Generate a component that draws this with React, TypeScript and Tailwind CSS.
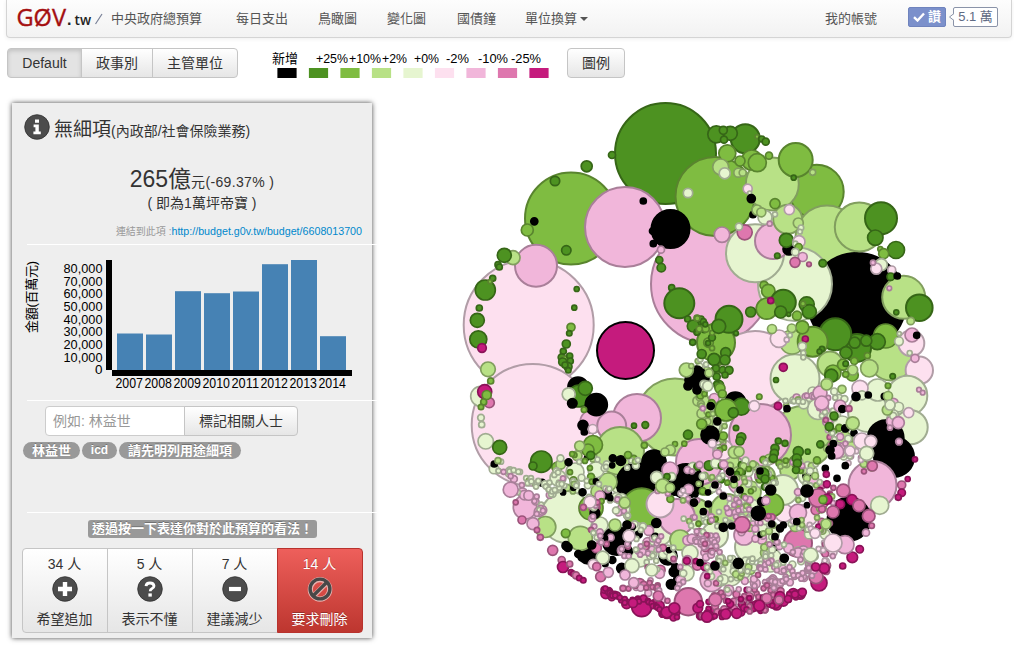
import React from "react";

const FILL: Record<string, string> = {
  a: "#4d9221", b: "#7fbc41", c: "#b8e186", d: "#e6f5d0", e: "#fde0ef",
  f: "#f1b6da", g: "#de77ae", h: "#c51b7d", k: "#000000",
};
const STROKE: Record<string, string> = {
  a: "#366617", b: "#59842e", c: "#819e5e", d: "#a1ac92", e: "#b19da7",
  f: "#a97f99", g: "#9b537a", h: "#8a1358", k: "#000000",
};

// Each entry: colour key, centre x, centre y, radius
const LARGE = `
a 665.5 153.5 50.5;b 571 218.5 46;f 625 227 40;f 710.5 284 59.5;b 816.7 191.7 27;c 827 237 31.5;b 715 196.5 39.5;k 670.5 229 19;
e 528.7 325 65;e 532.7 425 61;f 536 265.7 21;
c 772.3 184 26.5;k 857 302 49;d 795 284 37;d 755 253.3 29;f 773 241 18;c 787.7 219.3 14.5;
c 859.3 227 24.5;a 881 218.3 16;b 795.7 160 17;c 903.7 297.3 21.5;a 919.3 307.7 13.3;
e 755 370 39;c 803 437 31;d 795 378.7 24.5;f 760 435 31;c 675 417 38.5;f 637 418 24;f 591.7 421.7 11.5;f 611.7 426 14.5;
c 891 358 22.5;a 857 348 14;a 835.3 334.3 16;b 885.7 336 12;c 792 342 12;b 812.7 341.7 15;b 716 342.7 19;
e 911.3 343.3 13;e 919.3 370.3 13.7;d 868 412 20;d 907.3 395.7 20;d 910.7 427.3 17;k 885.7 438.3 18;k 894 457 20;
c 705 482 13;f 740 482 12;c 750 492 11;c 697 512 13;c 745 512 12;d 715 535 13;d 766 532 13;d 770 560 12;d 730 574 12;e 700 552 11;d 661 535 10;c 790 470 10;c 765 476 10;d 802 545 9;e 784 513 9;d 620 485 9;c 600 492 9;d 575 472 9;d 558 478 8;d 842 425 9;c 845 440 8;c 730 462 9;d 600 525 8;
d 877.7 390 11;d 818 409 10.5;c 620 451 24;f 699 462 23;k 636.5 483 20;k 654 462 12;k 686 481 17;
d 566.7 517 26;b 591 508 12;b 641.7 507.7 19.5;f 677 517 18;e 660 504 13.5;f 670 470 8;c 727 510 16;d 783 490 15;b 772 505 11.5;
k 616.7 541 14;k 588 555 9;c 580.3 538.3 12;c 545.3 527 10.5;f 525 507.3 11.7;
f 872.5 485 24;k 849 519 21.5;d 879.7 505.3 9;e 807 515 11;f 798 512.7 8.5;d 750 547 15;f 744 535 10;g 798 543 14;
c 680 540 10;d 690 553 8;d 686 573 8;f 711.7 580 11.5;d 640 558 9;e 723 450 10;d 808 475 10;k 668 556 9;c 608 482 9;d 596 470 8;
h 641.7 606.7 10;g 688.3 601.7 13.7;h 819 583 8;g 816 576.7 7`;

const SMALL = `
k 643.3 201 3;k 534.3 221.3 3.5;k 653 231 3.5;k 653.3 243.7 3;a 612 155 3.5;a 586.7 166.3 5.5;a 555 181 4.7;a 566.3 250.3 4.7;
b 527.3 230 6;c 513 257.7 7;a 504.3 255.3 7;a 498 264.7 3;a 499.3 267 3;a 485.3 290 10;a 492.7 278.3 3;b 490 281.7 2;a 576.7 289 2.5;
f 661 249.7 3.5;a 659.3 260 3.5;a 661.3 267.7 4.2;a 671.7 287.7 3;d 688 193 4.7;
a 679.3 303.3 15;a 687.7 319 3;a 693.3 326 6;a 697 332 3;a 692.7 342.3 3;b 697 318 3;
a 745.3 138.7 14.5;a 716.3 134.3 8.5;a 730.3 133.3 7;a 723.3 130.3 4;a 724 139.7 3.5;b 757 136.7 2;a 761.7 139 3;a 765.7 141.7 3.5;
b 727.3 153.3 8.5;b 751.7 160 10;b 757.3 162.7 9;b 740 161 5;b 769 155.7 3.5;c 720.7 167 8;d 724.7 173.3 5.5;c 738.3 172.7 4.5;c 742.7 172.7 3.5;
a 793.7 177.7 2.5;c 812.7 172.3 3;e 747.7 188.7 4.5;d 749.7 193 2;k 751.3 198.7 4;k 753 214.7 3;
b 775 203.7 5;e 789.3 209.7 5;d 765 217.3 7;d 775 214.3 2.5;c 757 210 5;c 761.3 212.3 4.5;f 769.7 223.7 2.5;c 798.3 223 5;d 801 227.7 2.7;d 800 231.7 2.3;
a 875.3 237.7 7.7;a 896 250 8.5;b 880.3 249 2.5;b 883.7 253.7 5;d 881.3 264.7 6;e 876.3 268.7 5.5;f 873 262.7 2.5;e 891.7 270 4;a 890.7 276.7 3.7;k 897.3 276 3;
g 744.7 232.3 7.5;d 739 226.7 3.5;f 722 234.7 7.7;k 789 249 6;a 786.3 240.3 7;e 799 241.7 6;d 795.3 243.7 2.5;b 798.7 247 3.5;d 795.3 252 3.7;f 802.7 257 4.5;g 795 262.3 5;g 809 264.3 2.3;a 822.7 263.3 3.7;a 777.3 255.7 2.7;
f 889.3 288.3 2.3;a 896.3 312.3 2.5;c 910.7 321 3.7;
f 912 335 7;k 916.7 335.3 3;d 899 341.3 4.3;d 899.3 333.7 2;d 909.7 353 2.5;f 915 358.3 4;f 919 389.7 2.3;f 922.7 392.7 2.3;e 908.7 412.7 5;f 898.3 422.7 6;f 890 427.7 2.5;f 899 441.7 3.3;h 915 459.3 2.5;
a 877.3 341.7 8;a 866.3 340.7 5.5;a 854.7 342.7 5.5;a 846 352.7 6;c 830 364 12.5;b 833 373 8;a 831.3 375.7 6.5;b 843 364.7 5.5;a 845.7 363.7 2.7;b 854.3 361 3.5;b 867.3 355.7 3;c 869.3 368.3 8.7;b 852.3 375 6;c 852.7 370 5;b 845.7 374.3 3;a 892.7 376.3 2.7;b 888 385.7 2.7;
b 802.3 327.3 6.5;c 791.7 328.3 4.3;h 805.3 339 3;d 802.3 346.3 4;d 803.3 353 2.5;d 803.3 357.3 2.5;e 779 338.7 8.7;e 786.7 339.7 2.5;d 790 335.3 2.3;c 772 329 4.5;
b 764 285.3 4;b 768.3 291 6.7;a 783.3 302.3 12.5;b 766.7 308.7 10.5;h 770.7 300.7 3;a 780.7 312 6;a 750.7 312 5;a 788.7 314.3 2;b 797 315.7 4.5;a 806.7 304.3 7.5;a 809.3 311.7 7;b 803 303.7 2.5;
a 822 349 2.6;a 819.5 351.5 2.4;
a 729 319.3 13.5;a 718.7 326.3 7;a 736 333.3 2.3;b 705.7 328.7 3.5;a 701 319 3;a 703.3 321.7 3;a 705.3 324.3 2.5;b 697.3 318.3 2.7;a 697 332.7 2.5;b 699.3 329 3;
h 783.3 367.3 4;a 776 380 2.5;b 759.3 396.7 2.7;h 778 406 3.7;k 735.3 402.7 10.5;a 741.3 406.7 8.5;b 726 410 11;a 733.3 412.7 5;e 754.3 406 5.3;a 736 428 2.7;b 723.3 436 4;a 741.3 437.3 4.5;a 740 441 4;k 787 408.7 3;
a 634 425.7 2.5;a 645.3 425 3.3;a 688 434.7 4.5;
a 479.3 308 3;a 477.3 320.3 7;a 478.3 339.3 8.5;h 482 348 4.3;c 488 369.3 7.3;b 490.7 381 3;d 480.7 396.3 10;h 484.7 391.7 7;g 489.3 402.7 5;b 486.7 395 4.5;b 483.7 402 3;b 481 407 2.7;d 481 417.7 3.3;d 481.7 424.7 3;d 485.7 441.3 7.7;a 499.7 447.3 7;a 541.3 461.7 10.7;a 533 466 4;k 494.3 464 3;c 498 460.7 3;
a 574.3 307.7 2.5;b 571 327.3 4;a 569.3 333.3 2.7;a 566.3 344 4;a 563.3 351.3 3;a 561.7 357.3 3.5;b 565 359 3;a 569.7 356 3;a 562.7 362 4;a 570.3 361 3;a 568 366.7 4;a 565 365 3;a 568.3 370.3 2.7;
k 578 387 10;a 579 396 11;a 585.3 388.3 7;d 568.7 394.3 6.5;k 572.3 403.3 4.7;k 596.3 404.7 11;b 584 409.7 2.7;k 583 425.3 5;k 584.3 432 3;e 592.7 429 4.5;
b 593 445 9.5;b 588 450 6;a 590.7 455.3 4;c 579.7 446 5;b 644.3 445.3 3;b 628 455 3.5;b 675 444 2.5;b 684.3 443.7 2.5;c 670.3 450 5;c 665 452 4;
k 697 372 6;k 692 380 7;k 700 378 9;k 697 390 4;k 688 386 4;c 686.3 370 7;c 691.3 366 2.5;
k 710 435 9;k 710.7 406 3.5;k 717.3 421.3 3.5;b 701.7 424 5;a 701.7 354 4.5;a 714 359.3 6;a 725.7 352.7 5;a 725 360 5;a 722.7 370 3.5;a 729 370.3 4;a 716 368.3 3.5;a 716.7 376.7 3.5;a 725 375 3;a 716.7 384.3 3;b 720 388.3 5;b 722.3 394 4;d 704 384.3 4;d 707.7 386 5;c 709 373 4;
c 734.3 452.3 6;c 739 451.7 5;b 720 450 2.7;f 717.3 454.3 4.5;f 723.7 464.3 4;e 712.3 443.7 4;
f 820 393 7;f 821.7 403 7;c 826.7 384.3 5.7;e 860 388.3 8;c 842 389.3 4;d 862 395.3 4.5;k 856 396.7 4;k 868.3 395 3;k 884.3 396.3 3;c 888 396 4.5;c 887.3 410 5;d 890 405 5;f 840 406 6;k 842.3 409 3.5;g 849 408.7 3;a 834 416 4;a 829.3 426.7 4;k 845.3 428.3 3.5;k 854 433 3;c 852.7 423.3 6.5;e 861.7 441 8;e 870.7 441.3 6;f 836.7 451.7 7;e 850 451 5;k 830 450 4;k 833.3 443.7 3;k 831.7 456 3;k 845.3 465.7 3;k 825.3 468.3 3;d 866.7 453.3 7;g 872.3 466 5;a 820.3 444.3 3.5;b 817 460.3 3.5;
a 778.3 441 3;a 785 443.3 3;a 775 448.3 4;a 774.3 453.3 4;a 773.3 458.3 4;a 798.3 451.7 5;a 796.7 458.3 4.5;a 797.3 463.3 4;a 807.7 451.7 2.5;a 763 474 6;a 765 479 4;a 796 470 3.5;
f 510.7 489.7 7.5;g 515.7 502.3 2.5;g 522 520 4;f 533 523.7 6;b 565.7 533.3 4.3;g 552.7 550.3 5;g 561.7 560 3.5;h 563 567 5.5;g 569.7 564 3;h 571 572.3 2.7;h 573.3 573.7 2.7;g 576 575.3 3.5;h 579.3 578 2.7;h 583.3 580.3 2.7;g 537 530 2.7;g 540.3 537.3 3;
k 566 545.7 4;k 568 547.5 4;k 591.7 545 4;k 578.3 554 3.5;k 582 557 4;k 621.7 568.3 5;k 612.3 560 3.5;k 605.3 564 2.7;d 602.7 557.7 6.5;e 593.3 564.3 5;g 596.7 566.7 4;g 600.7 576.7 5;f 608.3 572.3 5;d 632 565.7 7;f 625 575 5;f 633.7 582.7 5;g 623 588.3 3;d 651.7 570 6;g 658.3 596 5;
d 656.7 477.3 6;d 671.7 476.7 4;a 667 476.7 3;c 662.7 486 7;c 670 487.7 4.5;k 656.3 523 4.5;k 627 525 4;e 629 536 6;c 615 525 6;c 624.7 502.7 5.5;e 590 502 6;g 583.3 507.3 3;
g 818 498 9;h 827 499.3 5;b 823 499.7 4;g 843.3 490.7 6.5;h 852 499.7 5;h 840.3 504.3 4.3;g 859 505.7 6;g 868.7 516 6.3;f 866 532.7 3.5;g 871.7 525.7 2.7;h 859.7 549.3 3.7;h 852.3 557.3 5.3;h 842.7 566 3;f 845 544.7 9;e 833 543 9;d 810.7 555 7;e 815 533.3 5;c 826 524 5;g 833 512 6;h 824.3 568.3 5;h 815.7 567 4;g 742 524.7 8;
h 826.3 474.3 3;g 864 471.3 2.5;k 837 478.3 3;k 807 491 6;k 770.7 490 5;h 907.7 479 2.5;g 901.7 485 4;h 901.7 492.7 3.7;h 898.3 497.3 3;
k 723.3 496 3;k 708.3 504 3;k 694 502.7 3.5;k 703.3 511.7 3;k 715 485 3;k 730 471.7 3.5;k 734 479.3 3;k 760 471 3;k 740 490 3;k 758.3 513.3 7;k 761.7 501.7 4;k 771.7 524 3;k 780 528.3 3.5;k 783.3 525 3;k 796.7 521.7 3;k 775 536.7 3;k 723.3 527.3 4;k 731.7 526 3;k 715 566 4;k 738.3 563.3 5;k 784.3 558.3 4;k 700 562.7 3;f 766 500.7 4;
g 715.3 599.7 6.3;g 766.7 598.3 5;h 707 616.7 5.5;h 725.7 614 5;h 736.7 613.3 5;h 759.3 605.7 5.5;h 780 596.7 5;h 666.7 612.3 5.5;h 674.3 608.3 5.5;h 802.3 592.3 4;h 795 594.3 3.5;h 788 599 3.5;h 633 603 4.5;g 779 600 4`;

// Chains of small line items: way-points, number of items, spread, colours
type Chain = [number[], number, number, string];
const CHAINS: Chain[] = [
  [[497, 463, 510, 474, 530, 482, 560, 487, 585, 492], 34, 6, "ddcddfkdc"],
  [[518, 488, 542, 505, 540, 515], 16, 4, "ffdf"],
  [[545, 484, 552, 494, 566, 478], 14, 4, "dddf"],
  [[560, 462, 580, 458, 600, 465, 625, 462, 642, 463], 26, 6, "dcdbdkdb"],
  [[562, 472, 580, 482, 600, 492, 620, 500], 30, 8, "cddkbfdd"],
  [[600, 500, 592, 520, 600, 545, 608, 535], 24, 5, "fdfdkg"],
  [[615, 500, 625, 520, 645, 535, 660, 550], 26, 7, "dfdfkd"],
  [[618, 555, 640, 545, 655, 560, 650, 590], 30, 8, "dffdgkf"],
  [[655, 535, 670, 550, 680, 575, 674, 588], 24, 6, "dkfgfd"],
  [[632, 592, 645, 583, 660, 588, 665, 602], 14, 4, "gfg"],
  [[698, 382, 705, 400, 712, 415, 718, 432, 722, 452], 40, 8, "dcfdbfdc"],
  [[698, 325, 712, 340, 716, 362, 722, 385], 14, 6, "abaab"],
  [[700, 355, 705, 375, 700, 395], 12, 4, "dcc"],
  [[786, 404, 802, 400, 818, 394, 850, 397], 22, 4, "dddcf"],
  [[826, 408, 838, 425, 832, 446, 850, 458], 34, 9, "fedfbdgc"],
  [[850, 440, 862, 455, 870, 468], 10, 6, "decf"],
  [[890, 400, 898, 408, 891, 425], 8, 4, "dfd"],
  [[732, 468, 760, 464, 790, 465, 815, 468], 36, 6, "cdcbacd"],
  [[690, 476, 715, 470, 735, 475, 760, 485, 785, 478], 38, 9, "dcfadcb"],
  [[655, 488, 690, 495, 720, 485, 745, 500, 750, 515], 42, 9, "fcdkbfe"],
  [[692, 520, 705, 525, 725, 515, 755, 515, 775, 530], 40, 9, "fddcfgb"],
  [[695, 535, 712, 540, 705, 550, 720, 545], 42, 8, "fffgf"],
  [[735, 505, 746, 525, 760, 535, 790, 545], 34, 9, "ffdkcf"],
  [[790, 522, 808, 530, 826, 530], 22, 6, "cdcde"],
  [[800, 470, 815, 485, 800, 500], 18, 9, "dkcdf"],
  [[820, 480, 832, 495, 815, 512, 828, 525], 20, 7, "gfchg"],
  [[722, 558, 738, 575, 755, 565, 770, 548], 40, 8, "dcddd"],
  [[760, 560, 780, 568, 800, 558, 815, 565], 40, 8, "fddfff"],
  [[765, 582, 780, 581, 800, 576, 814, 570], 32, 4, "ff"],
  [[690, 560, 710, 572, 730, 585, 760, 580], 26, 8, "fdfhgd"],
  [[820, 545, 830, 555, 828, 570], 12, 5, "feg"],
  [[718, 592, 740, 600, 760, 590, 785, 596], 30, 6, "gfggf"],
  [[698, 604, 720, 606, 745, 602, 770, 602], 18, 5, "ghgh"],
  [[603, 590, 612, 596, 628, 601, 650, 601, 664, 612, 680, 617], 42, 3, "h"],
  [[699, 616, 720, 614, 742, 609, 765, 608, 782, 600, 804, 591], 40, 3, "hhhhg"],
];

type Bubble = { c: string; x: number; y: number; r: number };

const parse = (s: string): Bubble[] =>
  s.trim().split(";").map((t) => {
    const [c, x, y, r] = t.trim().split(" ");
    return { c, x: +x, y: +y, r: +r };
  });

function random(seed: number) {
  let s = seed;
  return () => {
    s = (s * 1664525 + 1013904223) % 4294967296;
    return s / 4294967296;
  };
}

function chainBubbles(): Bubble[] {
  const rnd = random(41);
  const out: Bubble[] = [];
  for (const [p, n, spread, colors] of CHAINS) {
    const segs = p.length / 2 - 1;
    for (let i = 0; i < n; i++) {
      const t = (i / n) * segs;
      const k = Math.floor(t);
      const u = t - k;
      const x = p[2 * k] * (1 - u) + p[2 * k + 2] * u + (rnd() - 0.5) * 2 * spread;
      const y = p[2 * k + 1] * (1 - u) + p[2 * k + 3] * u + (rnd() - 0.5) * 2 * spread;
      const big = rnd();
      out.push({
        c: colors[Math.floor(rnd() * colors.length)],
        x, y,
        r: big > 0.88 ? 4.8 : big > 0.6 ? 3.4 : 2.5,
      });
    }
  }
  return out.sort((m, n) => n.r - m.r);
}

const BUBBLES = [...parse(LARGE), ...chainBubbles(), ...parse(SMALL)];

function BubbleChart() {
  return (
    <svg viewBox="440 90 520 550" width="520" height="550" className="block shrink-0">
      {BUBBLES.map((b, i) => (
        <circle key={i} cx={b.x} cy={b.y} r={b.r} fill={FILL[b.c]} stroke={STROKE[b.c]} strokeWidth={b.r > 12 ? 2 : 1.7} />
      ))}
      <circle cx="625.5" cy="350.5" r="28.5" fill="#c51b7d" stroke="#000" strokeWidth="2" />
    </svg>
  );
}

const LEGEND: [string, number, number, string][] = [
  ["新增", 272, 26, "#000000"], ["+25%", 316, 32, "#4d9221"], ["+10%", 349, 32, "#7fbc41"],
  ["+2%", 382, 25, "#b8e186"], ["+0%", 414, 25, "#e6f5d0"], ["-2%", 446, 23, "#fde0ef"],
  ["-10%", 478, 30, "#f1b6da"], ["-25%", 511, 30, "#de77ae"],
];

function Legend() {
  return (
    <svg viewBox="268 48 290 32" width="290" height="32" className="block">
      {LEGEND.map(([t, x, w]) => (
        <text key={t} x={x} y={63} fontSize={t === "新增" ? 13 : 13.5} textLength={w} lengthAdjust="spacingAndGlyphs">{t}</text>
      ))}
      {[...LEGEND.map((l) => l[3]), "#c51b7d"].map((c, i) => (
        <rect key={c} x={277.4 + 31.5 * i} y="68" width="19.2" height="10" fill={c} />
      ))}
    </svg>
  );
}

const BARS: [string, number][] = [
  ["2007", 333.5], ["2008", 334.5], ["2009", 291.2], ["2010", 293.2],
  ["2011", 291.5], ["2012", 264.2], ["2013", 260], ["2014", 336.2],
];
const TICKS = ["0", "10,000", "20,000", "30,000", "40,000", "50,000", "60,000", "70,000", "80,000"];

function BarChart() {
  return (
    <svg viewBox="12 245 360 155" width="360" height="155" className="block">
      <text transform="translate(36 333) rotate(-90)" fontSize="13" textLength="72">金額(百萬元)</text>
      {TICKS.map((t, i) => (
        <text key={t} x={t === "0" ? 95 : 63.5} y={374.3 - 12.65 * i} fontSize="12.8" textLength={t === "0" ? 7.5 : 39} lengthAdjust="spacingAndGlyphs">{t}</text>
      ))}
      <rect x="106" y="260" width="6" height="110" />
      <rect x="112" y="370" width="240" height="6" />
      {BARS.map(([y, top], i) => (
        <g key={y}>
          <rect x={117 + 29 * i} y={top} width="26" height={370 - top} fill="#4682b4" />
          <text x={115.5 + 29 * i} y="388" fontSize="14" textLength="27.5" lengthAdjust="spacingAndGlyphs">{y}</text>
        </g>
      ))}
    </svg>
  );
}

function RoundIcon({ kind }: { kind: "info" | "plus" | "question" | "minus" | "ban" }) {
  return (
    <svg viewBox="0 0 26 26" width="26" height="26" className="block">
      {kind === "ban" ? (
        <>
          <g fill="none" stroke="#e9b3b0" strokeWidth="5.2">
            <circle cx="13" cy="13.4" r="9.7" /><path d="M6.5 20 19.5 7" />
          </g>
          <g fill="none" stroke="#484848" strokeWidth="3.4">
            <circle cx="13" cy="13" r="9.9" /><path d="M6.2 19.8 19.8 6.2" />
          </g>
        </>
      ) : (
        <>
          <circle cx="13" cy="13" r="12.3" fill="#4c4c4c" stroke="#2f2f2f" strokeWidth=".8" />
          {kind === "plus" && <path d="M6 13h14M13 6v14" stroke="#fff" strokeWidth="4.4" />}
          {kind === "minus" && <path d="M7 13h12" stroke="#fff" strokeWidth="4.2" />}
          {kind === "question" && (
            <>
              <path d="M9 10.2Q9.3 7 13 7t4 3q0 1.7-2.2 2.7-1.6.8-1.6 2.6" fill="none" stroke="#fff" strokeWidth="2.8" />
              <rect x="11.4" y="17.4" width="3.4" height="3.2" fill="#fff" />
            </>
          )}
          {kind === "info" && (
            <path d="M11 5.6h4v3.2h-4zM9.6 10.6h5.2v7h2v2.6H9.4v-2.6h2v-4.4H9.6z" fill="#fff" />
          )}
        </>
      )}
    </svg>
  );
}

const VOTES = [
  { n: "34 人", kind: "plus", label: "希望追加" },
  { n: "5 人", kind: "question", label: "表示不懂" },
  { n: "7 人", kind: "minus", label: "建議減少" },
  { n: "14 人", kind: "ban", label: "要求刪除" },
] as const;

const btn = "border border-[#c5c5c5] bg-gradient-to-b from-white to-[#e6e6e6] text-[#333] text-[14px] leading-5 flex items-center justify-center whitespace-nowrap";
const rule = "h-px w-[350px] bg-white ml-[15px] shrink-0";
const boldShadow = "[text-shadow:0_-1px_0_rgba(0,0,0,0.25)]";

export default function App() {
  return (
    <div className="flex h-[647px] w-[1014px] flex-col overflow-hidden bg-white text-[14px] text-[#333] [font-family:'Liberation_Sans','Noto_Sans_CJK_TC',sans-serif]">
      <header className="ml-[6px] flex h-[38px] w-[1006px] shrink-0 items-center rounded-b border border-t-0 border-[#d4d4d4] bg-gradient-to-b from-[#fdfdfd] to-[#f2f2f2] text-[13px] text-[#555] shadow-[0_1px_4px_rgba(0,0,0,0.07)]">
        <div className="ml-[9px] flex h-full w-[95px] shrink-0 items-center whitespace-nowrap">
          <svg width="76" height="38" viewBox="16 0 76 38" className="block">
            <text x="16.5" y="25.5" fontSize="24" fontFamily="Open Sans" fill="#a40e10" stroke="#a40e10" strokeWidth=".4" textLength="49.5" lengthAdjust="spacingAndGlyphs">GØV</text>
            <text x="67" y="24.5" fontSize="16" fontWeight="bold" fill="#222">.</text>
            <text x="74.5" y="24.5" fontSize="15" fontFamily="Open Sans" fontWeight="600" fill="#222" textLength="16.5" lengthAdjust="spacingAndGlyphs">tw</text>
          </svg>
          <svg width="10" height="14" className="ml-[2px]"><path d="M1.5 12 8 2" stroke="#777f96" strokeWidth="1.2" /></svg>
        </div>
        <span className="w-[125px]">中央政府總預算</span>
        <span className="w-[82px]">每日支出</span>
        <span className="w-[69px]">鳥瞰圖</span>
        <span className="w-[70px]">變化圖</span>
        <span className="w-[68px]">國債鐘</span>
        <span className="flex w-[300px] items-center gap-[3px]">單位換算
          <svg width="8" height="4"><path d="M0 0h8L4 4z" fill="#555" /></svg>
        </span>
        <span className="w-[83px]">我的帳號</span>
        <span className="mb-[3px] flex h-5 w-[38px] items-center justify-center gap-[3px] rounded-[2px] border border-[#6f83bd] bg-[#7b90cb] font-bold text-white">
          <svg width="12" height="10" viewBox="0 0 12 10"><path d="M1 5.2 4.5 8.5 11 1.5" fill="none" stroke="#fff" strokeWidth="2.4" /></svg>
          讚
        </span>
        <svg width="6" height="8" viewBox="0 0 6 8" className="relative z-10 mb-[3px] ml-[2px] shrink-0"><path d="M6 .5 1.5 4 6 7.5" fill="#fff" stroke="#8a93a8" /></svg>
        <span className="mb-[3px] -ml-px flex h-5 w-[45px] shrink-0 items-center justify-center whitespace-nowrap rounded-[2px] border border-[#8a93a8] bg-white text-[13px] text-[#5f6b84]">5.1 萬</span>
      </header>

      <div className="flex h-[40px] shrink-0 items-end">
        <div className="ml-[7px] flex">
          <button className={`${btn} h-[30px] w-[75px] rounded-l !bg-none !bg-[#e3e3e3] shadow-[inset_0_2px_4px_rgba(0,0,0,0.15)]`}>Default</button>
          <button className={`${btn} -ml-px h-[30px] w-[72px]`}>政事別</button>
          <button className={`${btn} -ml-px h-[30px] w-[86px] rounded-r`}>主管單位</button>
        </div>
        <div className="ml-[30px] h-[30px] text-black"><Legend /></div>
        <button className={`${btn} ml-[9px] h-[30px] w-[58px] rounded`}>圖例</button>
      </div>

      <main className="flex pt-[12px]">
        <section className="ml-[12px] mt-[13px] flex h-[535px] w-[360px] shrink-0 flex-col bg-[#eee] shadow-[0_0_5px_#444]">
          <div className="flex h-[50px] shrink-0 items-start whitespace-nowrap pl-[12px] pt-[11px]">
            <RoundIcon kind="info" />
            <h2 className="ml-[4px] mt-[2px] flex items-baseline leading-[28px]">
              <span className="text-[19px]">無細項</span>
              <span className="text-[14px]">(內政部/社會保險業務)</span>
            </h2>
          </div>
          <div className="flex h-[91px] shrink-0 flex-col items-center whitespace-nowrap">
            <div className="mt-[10px] flex h-[31px] items-baseline pl-[20px] leading-[32px]">
              <span className="text-[23px]">265億</span><span className="tracking-[0.35px]">元(-69.37% )</span>
            </div>
            <div className="h-[18px] pl-[20px] leading-[18px]">( 即為1萬坪帝寶 )</div>
            <div className="mt-[11px] flex w-full items-baseline justify-end pr-[10px] text-[10px] leading-4 text-[#999]">
              <span>連結到此項 :</span>
              <a className="text-[10.7px] text-[#08c]">http://budget.g0v.tw/budget/6608013700</a>
            </div>
          </div>
          <div className={rule} />
          <div className="h-[155px] shrink-0 text-black"><BarChart /></div>
          <div className={rule} />
          <div className="h-[111px] shrink-0">
            <div className="flex pl-[33px] pt-[5px]">
              <div className="flex h-[30px] w-[140px] items-center rounded-l border border-[#ccc] bg-white pl-[7px] text-[14px] text-[#999]">例如: 林益世</div>
              <button className={`${btn} -ml-px h-[30px] w-[114px] rounded-r`}>標記相關人士</button>
            </div>
            <div className={`flex gap-[2px] pl-[11px] pt-[6px] text-[13px] font-bold leading-[17px] text-white ${boldShadow}`}>
              <span className="w-[57px] rounded-full bg-[#999] text-center">林益世</span>
              <span className="w-[35px] rounded-full bg-[#999] text-center text-[12px]">icd</span>
              <span className="w-[122px] rounded-full bg-[#999] text-center">請先明列用途細項</span>
            </div>
          </div>
          <div className={rule} />
          <div className="flex h-[35px] shrink-0 pl-[76px] pt-[7px]">
            <span className={`h-[18px] w-[229px] whitespace-nowrap rounded-[3px] bg-[#999] pl-[4px] text-[13px] font-bold leading-[18px] text-white ${boldShadow}`}>透過按一下表達你對於此預算的看法！</span>
          </div>
          <div className="flex pl-[10px]">
            {VOTES.map((v, i) => (
              <button
                key={v.label}
                className={`${btn} h-[85px] w-[86px] flex-col !justify-start pr-px pt-[5px] ${i ? "-ml-px" : "rounded-l"} ${
                  i === 3
                    ? "rounded-r !border-[#b8322d] !from-[#ee5f5b] !to-[#bd362f] !text-white [text-shadow:0_-1px_0_rgba(0,0,0,0.25)]"
                    : ""
                }`}
              >
                <span className="h-[22px] leading-[20px]">{v.n}</span>
                <RoundIcon kind={v.kind} />
                <span className="mt-[7px] leading-[20px]">{v.label}</span>
              </button>
            ))}
          </div>
        </section>
        <div className="ml-[68px]"><BubbleChart /></div>
      </main>
    </div>
  );
}
